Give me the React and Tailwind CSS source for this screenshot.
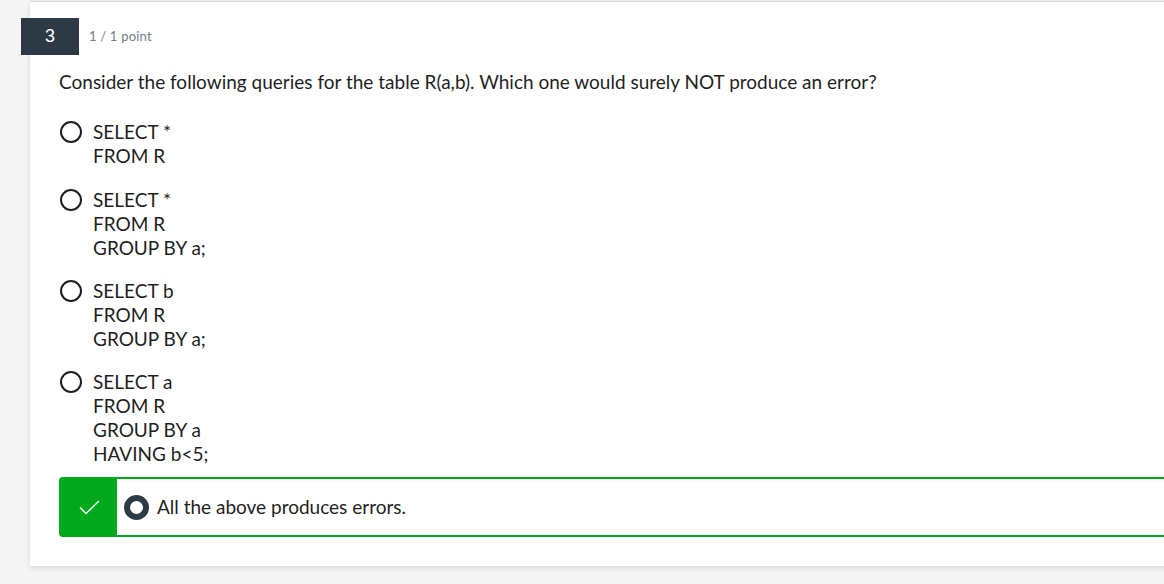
const options = [
  ["SELECT *", "FROM R"],
  ["SELECT *", "FROM R", "GROUP BY a;"],
  ["SELECT b", "FROM R", "GROUP BY a;"],
  ["SELECT a", "FROM R", "GROUP BY a", "HAVING b<5;"],
];

const Radio = () => (
  <span className="mt-px ml-px h-[22px] w-[22px] shrink-0 rounded-full border-2 border-[#1f1f1f]" />
);

const App = () => {
  return (
    <div className="h-[584px] w-[1164px] overflow-hidden bg-[#f5f5f5] pt-px font-['Lato','Liberation_Sans',sans-serif] text-[#1f1f1f]">
      <div className="ml-[30px] w-[1200px] border-t border-[#d9d9d9] bg-white pt-4 pb-[29px] shadow-[0_2px_6px_rgba(0,0,0,0.12)]">
        <div className="flex items-center">
          <div className="-ml-[9px] flex h-[37px] w-[58px] items-center justify-center bg-[#2d3a45] font-['Liberation_Sans',sans-serif] text-[18px] text-white">
            3
          </div>
          <span className="ml-[10px] text-[13px] tracking-[0.2px] text-[#737d87]">1 / 1 point</span>
        </div>

        <p className="mt-[15px] ml-[29px] text-[19px] leading-6">
          Consider the following queries for the table R(a,b). Which one would surely NOT produce an error?
        </p>

        <div className="mt-[26px] ml-[29px] flex flex-col gap-[19px]">
          {options.map((lines, i) => (
            <div key={i} className={`flex items-start gap-[11px] ${i === 0 ? "mb-px" : ""}`}>
              <Radio />
              <div className="text-[19px] leading-6">
                {lines.map((l, j) => (
                  <div key={j}>{l}</div>
                ))}
              </div>
            </div>
          ))}
        </div>

        <div className="mt-[11px] ml-[29px] flex h-[60px] items-stretch rounded-[4px] border-2 border-[#00a81b]">
          <div className="flex w-[56px] items-center justify-center bg-[#00a81b]">
            <svg width="21" height="15" viewBox="0 0 21 15" fill="none">
              <path d="M1 7.5 L7 13.5 L20 1" stroke="white" strokeWidth="1.4" />
            </svg>
          </div>
          <div className="flex items-center">
            <span className="ml-[7px] h-[25px] w-[25px] rounded-full border-[6px] border-[#2d3a45] bg-white" />
            <span className="ml-[8px] text-[19px] leading-6">All the above produces errors.</span>
          </div>
        </div>
      </div>
    </div>
  );
};

export default App;
